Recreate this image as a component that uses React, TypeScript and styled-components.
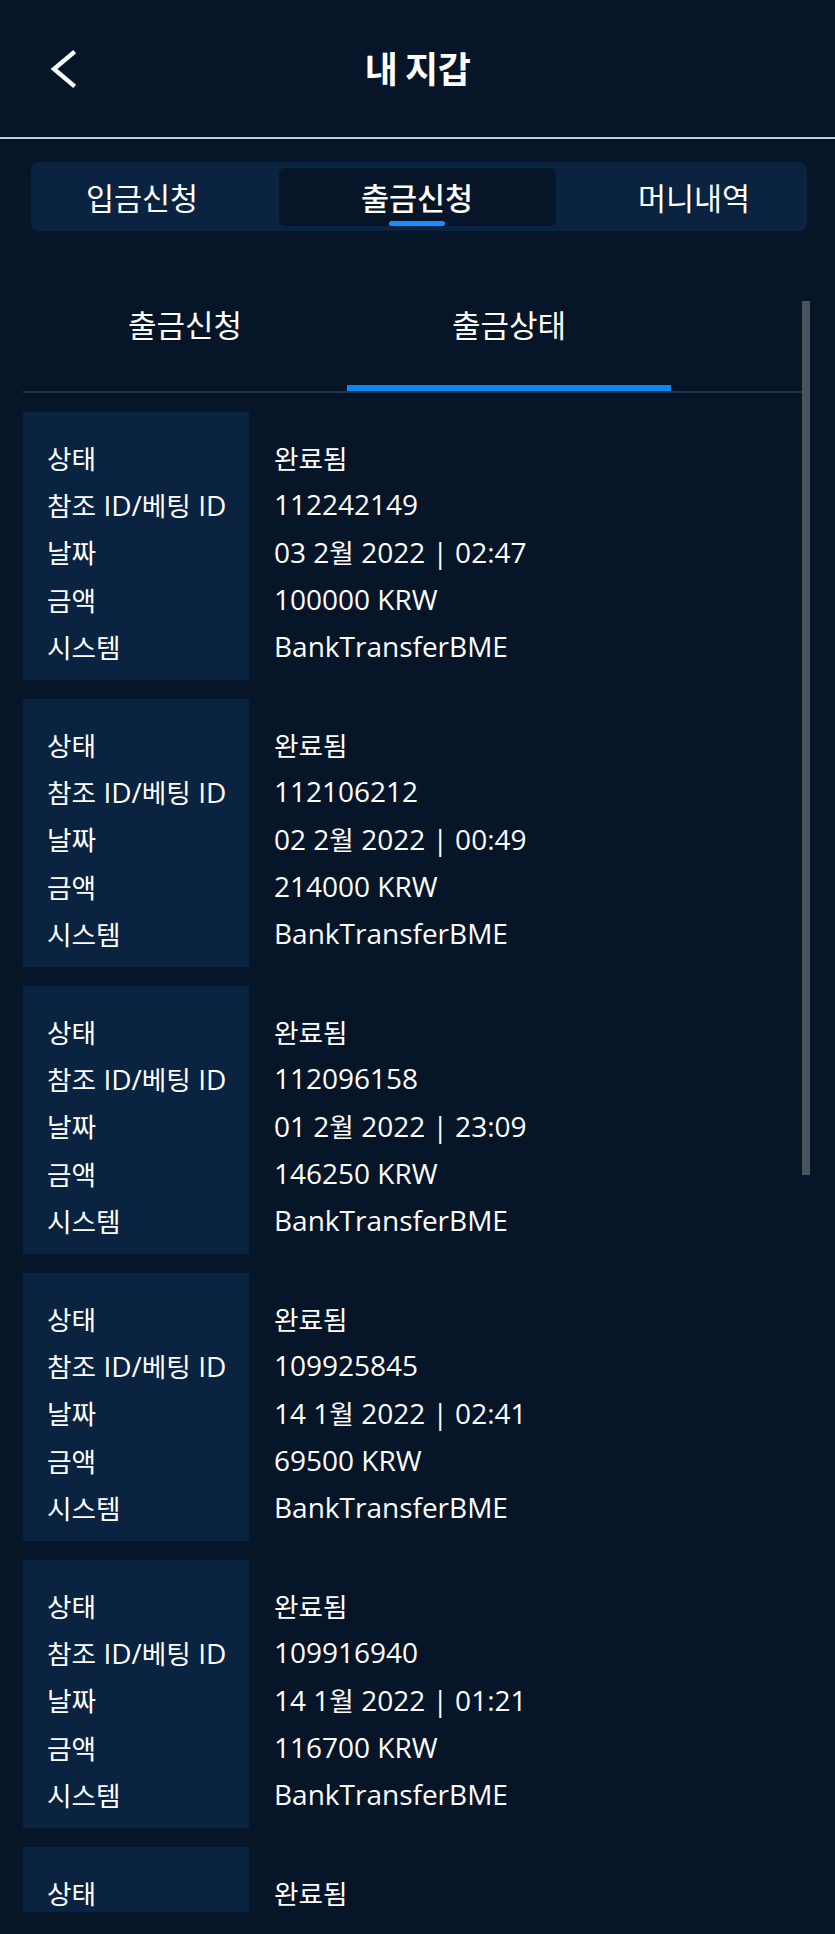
import * as React from 'react';
import styled, {createGlobalStyle, css} from 'styled-components';

//region [[ Styles ]]

const GlobalStyle = createGlobalStyle`
  html, body {
    margin: 0;
    padding: 0;
    background-color: #061528;
  }
  body {
    font-family: "Open Sans", "Noto Sans CJK KR", sans-serif;
    color: #ffffff;
  }
`;

const Page = styled.div`
  width: 835px;
  min-height: 1934px;
  background-color: #061528;
`;

const Header = styled.header`
  display: grid;
  grid-template-columns: 1fr auto 1fr;
  align-items: center;
  height: 137px;
  border-bottom: 2px solid #c9cdd2;
`;

const BackButton = styled.div`
  display: flex;
  align-items: center;
  padding-left: 50px;
`;

const Title = styled.h1`
  margin: 0 0 3px;
  font-family: "Noto Sans CJK KR", sans-serif;
  font-size: 36px;
  line-height: 40px;
  font-weight: 700;
  letter-spacing: -0.5px;
  color: #ffffff;
`;

const TabBar = styled.nav`
  display: flex;
  justify-content: space-between;
  align-items: center;
  margin: 23px 28px 0 31px;
  height: 69px;
  border-radius: 8px;
  background-color: #0a2340;
`;

const Tab = styled.div<{ $active?: boolean; $width: number }>`
  ${(props) => css`
    position: relative;
    display: flex;
    align-items: center;
    justify-content: center;
    width: ${props.$width}px;
    height: 58px;
    border-radius: 6px;
    font-family: "Noto Sans CJK KR", sans-serif;
    font-size: 30.5px;
    font-weight: ${props.$active ? 500 : 400};
    color: #ffffff;
    background-color: ${props.$active ? '#061528' : 'transparent'};
    ${props.$active && css`
      &::after {
        content: "";
        position: absolute;
        left: 50%;
        bottom: 0;
        width: 56px;
        height: 5px;
        margin-left: -28px;
        border-radius: 3px;
        background-color: #1a8cff;
      }
    `}
  `}
`;

const ScrollArea = styled.section`
  position: relative;
  margin-top: 69px;
  height: 1612px;
  overflow: hidden;
`;

const ScrollThumb = styled.div`
  position: absolute;
  top: 1px;
  right: 25px;
  width: 8px;
  height: 874px;
  background-color: #4a525e;
`;

const SubTabs = styled.div`
  display: flex;
  margin: 0 25px 0 23px;
  border-bottom: 2px solid #243246;
`;

const SubTab = styled.div<{ $active?: boolean }>`
  ${(props) => css`
    width: 324px;
    padding: 4px 0 41px;
    line-height: 40px;
    text-align: center;
    font-family: "Noto Sans CJK KR", sans-serif;
    font-size: 31px;
    color: #ffffff;
    border-bottom: 6px solid ${props.$active ? '#0d87f2' : 'transparent'};
  `}
`;

const List = styled.div`
  display: flex;
  flex-direction: column;
  gap: 19px;
  padding: 19px 25px 0 23px;
`;

const Card = styled.article`
  display: grid;
  grid-template-columns: 226px 1fr;
  column-gap: 25px;
  height: 268px;
`;

const Column = styled.div<{ $labels?: boolean }>`
  ${(props) => css`
    padding: 22px 0 9px ${props.$labels ? '24px' : '0'};
    background-color: ${props.$labels ? '#0a2340' : 'transparent'};
  `}
`;

const Line = styled.div`
  height: 47.2px;
  font-family: "Open Sans", "Noto Sans CJK KR", sans-serif;
  font-size: 28px;
  line-height: 47.2px;
  white-space: nowrap;
  color: #ffffff;
`;

const Ko = styled.span`
  font-family: "Noto Sans CJK KR", sans-serif;
  font-size: 26.7px;
`;

//endregion [[ Styles ]]

//region [[ Data ]]

interface Payout {
  status: string;
  id: string;
  date: string;
  amount: string;
  system: string;
}

const payouts: Payout[] = [
  {status: '완료됨', id: '112242149', date: '03 2월 2022 | 02:47', amount: '100000 KRW', system: 'BankTransferBME'},
  {status: '완료됨', id: '112106212', date: '02 2월 2022 | 00:49', amount: '214000 KRW', system: 'BankTransferBME'},
  {status: '완료됨', id: '112096158', date: '01 2월 2022 | 23:09', amount: '146250 KRW', system: 'BankTransferBME'},
  {status: '완료됨', id: '109925845', date: '14 1월 2022 | 02:41', amount: '69500 KRW', system: 'BankTransferBME'},
  {status: '완료됨', id: '109916940', date: '14 1월 2022 | 01:21', amount: '116700 KRW', system: 'BankTransferBME'},
  {status: '완료됨', id: '109804417', date: '12 1월 2022 | 22:15', amount: '80000 KRW', system: 'BankTransferBME'},
];

const labels = ['상태', '참조 ID/베팅 ID', '날짜', '금액', '시스템'];

//endregion [[ Data ]]

//region [[ Functions ]]

// hangul runs get their own size so they sit with the wide latin glyphs
const mixed = (text: string) =>
  text.split(/([가-힣]+)/).map((part, i) =>
    /[가-힣]/.test(part) ? <Ko key={i}>{part}</Ko> : part
  );

//endregion [[ Functions ]]

const BackIcon = () => (
  <svg width="28" height="40" viewBox="0 0 28 40" fill="none">
    <polyline points="23,4 4,20 23,36" stroke="#ffffff" strokeWidth="4.4" strokeLinecap="square" strokeLinejoin="miter"/>
  </svg>
);

const PayoutCard = ({ payout }: { payout: Payout }) => {
  const values = [payout.status, payout.id, payout.date, payout.amount, payout.system];
  return <Card>
    <Column $labels>
      {labels.map((l) => <Line key={l}>{mixed(l)}</Line>)}
    </Column>
    <Column>
      {values.map((v, i) => <Line key={i}>{mixed(v)}</Line>)}
    </Column>
  </Card>;
};

export default function App() {
  return <Page>
    <GlobalStyle/>
    <Header>
      <BackButton><BackIcon/></BackButton>
      <Title>내 지갑</Title>
      <div/>
    </Header>
    <TabBar>
      <Tab $width={222}>입금신청</Tab>
      <Tab $width={277} $active>출금신청</Tab>
      <Tab $width={226}>머니내역</Tab>
    </TabBar>
    <ScrollArea>
      <SubTabs>
        <SubTab>출금신청</SubTab>
        <SubTab $active>출금상태</SubTab>
      </SubTabs>
      <List>
        {payouts.map((p) => <PayoutCard key={p.id} payout={p}/>)}
      </List>
      <ScrollThumb/>
    </ScrollArea>
  </Page>;
}
